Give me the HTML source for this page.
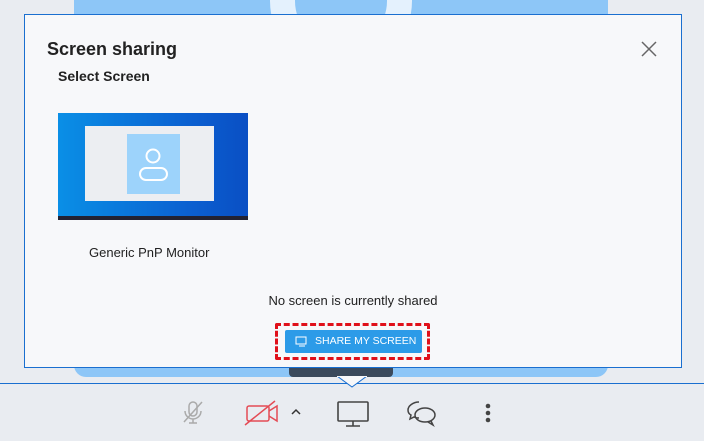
<!DOCTYPE html>
<html><head><style>
body{margin:0;width:704px;height:440px;background:#e9ecf1;position:relative;overflow:hidden;font-family:"Liberation Sans",sans-serif}
.tile{position:absolute;left:74px;top:0;width:534px;height:377px;background:#8dc6f7;border-radius:0 0 12px 12px;overflow:hidden}
.circ{position:absolute;left:196px;top:-70px;width:92px;height:92px;border-radius:50%;border:25px solid #e4f1fd;}
.dlg{position:absolute;left:24px;top:14px;width:656px;height:352px;background:#f7f8fa;border:1px solid #1a6fd0}
.t1{position:absolute;left:22px;top:24px;font-size:18px;font-weight:bold;color:#222}
.t2{position:absolute;left:33px;top:53px;font-size:14px;font-weight:bold;color:#222}
.thumb{position:absolute;left:33px;top:98px;width:190px;height:107px;background:linear-gradient(90deg,#0a8fe6,#0b5fd0 70%,#0a4fc4)}
.win{position:absolute;left:27px;top:13px;width:129px;height:75px;background:#eceef2}
.av{position:absolute;left:42px;top:8px;width:53px;height:60px;background:#9dd3fb}
.tb{position:absolute;left:0;bottom:0;width:190px;height:4px;background:#223}
.lbl{position:absolute;left:64px;top:230px;font-size:13px;color:#222}
.ns{position:absolute;left:0;width:656px;text-align:center;top:278px;font-size:13px;color:#222}
.btnb{position:absolute;left:275px;top:323px;width:149px;height:31px;border:3px dashed #e0101a;border-radius:2px}
.btn{position:absolute;left:285px;top:330px;width:137px;height:23px;background:#2c9be8;border-radius:2px;color:#fff;font-size:10.5px;line-height:23px}
.bar{position:absolute;left:0;top:383px;width:704px;height:57px;background:#e9ecf1;border-top:1px solid #1a6fd0}
.name{position:absolute;left:289px;top:367px;width:104px;height:10px;background:#3b4a5c;border-radius:0 0 4px 4px}
</style></head><body>
<div class="tile"><div class="circ"></div></div>
<div class="name"></div>
<div class="dlg">
<div class="t1">Screen sharing</div>
<svg style="position:absolute;left:616px;top:26px" width="16" height="16"><path d="M1 1L15 15M15 1L1 15" stroke="#666" stroke-width="1.5"/></svg>
<div class="t2">Select Screen</div>
<div class="thumb"><div class="win"><div class="av"><svg width="53" height="60"><circle cx="26" cy="22" r="6.5" fill="none" stroke="#fff" stroke-width="2"/><rect x="13" y="34" width="27" height="12" rx="6" fill="none" stroke="#fff" stroke-width="2"/></svg></div></div><div class="tb"></div></div>
<div class="lbl">Generic PnP Monitor</div>
<div class="ns">No screen is currently shared</div>
</div>
<div class="btnb"></div>
<div class="btn"><svg style="position:absolute;left:10px;top:6px" width="14" height="11" fill="none" stroke="#fff"><rect x="1" y="1" width="10" height="7"/><path d="M4 10h6"/></svg><span style="position:absolute;left:30px">SHARE MY SCREEN</span></div>
<div class="bar"></div>
<svg style="position:absolute;left:337px;top:376px" width="30" height="12"><path d="M0 0L15 11L30 0" fill="#f7f8fa" stroke="#1a6fd0"/><rect x="0" y="0" width="30" height="1" fill="#f7f8fa"/></svg>
<svg style="position:absolute;left:178px;top:398px" width="30" height="30" fill="none" stroke="#aaa" stroke-width="1.5"><rect x="11" y="4" width="8" height="14" rx="4"/><path d="M7 13a8 8 0 0016 0M15 21v4M11 25h8M6 24L24 4"/></svg>
<svg style="position:absolute;left:243px;top:398px" width="40" height="30" fill="none" stroke="#e44b55" stroke-width="1.5"><rect x="4" y="8" width="22" height="15" rx="2"/><path d="M26 13l8-5v15l-8-5M2 27L32 3"/></svg>
<svg style="position:absolute;left:290px;top:407px" width="12" height="10" fill="none" stroke="#333" stroke-width="1.5"><path d="M2 7l4-4 4 4"/></svg>
<svg style="position:absolute;left:336px;top:400px" width="34" height="28" fill="none" stroke="#444" stroke-width="1.6"><rect x="2" y="2" width="30" height="19" rx="1"/><path d="M17 21v5M10 26h14"/></svg>
<svg style="position:absolute;left:405px;top:399px" width="34" height="30" fill="none" stroke="#444" stroke-width="1.5"><path d="M14 3c-6 0-11 4-11 8 0 2 1 4 3 5l-1 4 4-2c2 1 3 1 5 1"/><ellipse cx="20" cy="16" rx="10" ry="7"/><path d="M26 22l2 4-5-3"/></svg>
<svg style="position:absolute;left:484px;top:402px" width="8" height="24" fill="#444"><circle cx="4" cy="4" r="2.3"/><circle cx="4" cy="11" r="2.3"/><circle cx="4" cy="18" r="2.3"/></svg>
</body></html>
